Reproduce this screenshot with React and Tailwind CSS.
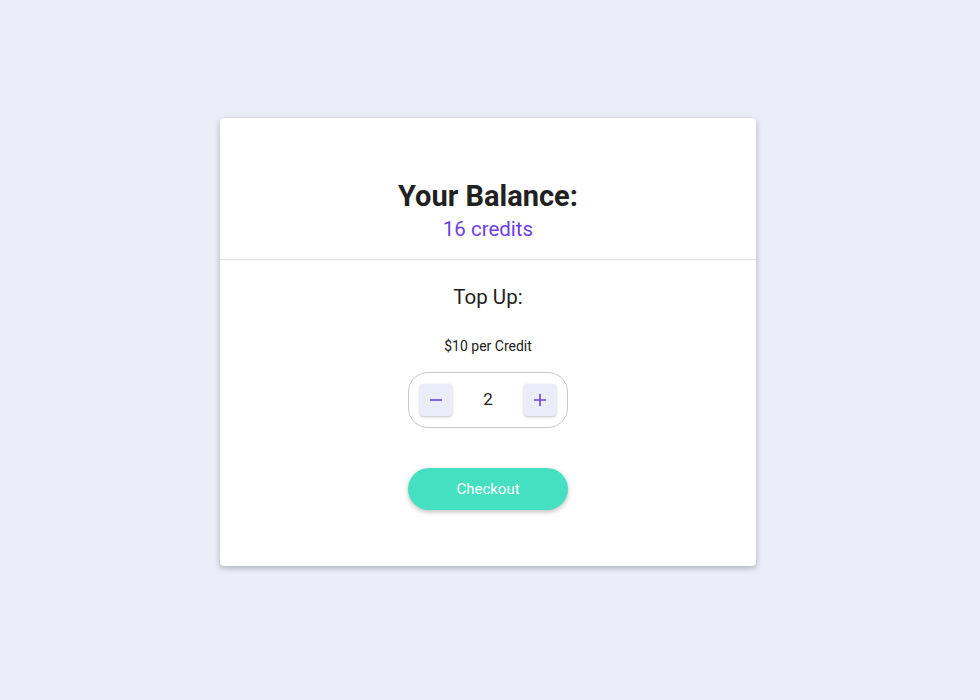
import { useState } from "react";

export default function App() {
  const [qty, setQty] = useState(2);

  return (
    <div
      className="min-h-screen w-full bg-[#ebeef9] flex items-start justify-center pt-[118px] pr-[4px]"
      style={{ fontFamily: "Roboto, 'Liberation Sans', sans-serif" }}
    >
      <div className="w-[536px] h-[448px] bg-white rounded-[4px] shadow-[0_2px_6px_rgba(0,0,0,0.28)] flex flex-col">
        {/* balance */}
        <div className="h-[142px] border-b border-[#e4e4e4] flex flex-col items-center pt-[61px]">
          <h1 className="text-[29px] leading-[34px] font-bold text-[#212121]">Your Balance:</h1>
          <p className="text-[20.5px] leading-[26px] text-[#6e3ee6] mt-[3px]">16 credits</p>
        </div>

        {/* top up */}
        <div className="flex flex-col items-center pt-[24px]">
          <h2 className="text-[20.5px] leading-[26px] text-[#212121]">Top Up:</h2>
          <p className="text-[14px] leading-[18px] text-[#212121] mt-[27px]">$10 per Credit</p>

          <div className="mt-[17px] w-[160px] h-[56px] rounded-[20px] border border-[#c9c9c9] flex items-center justify-between px-[11px]">
            <button
              onClick={() => setQty((q) => Math.max(0, q - 1))}
              className="w-[32px] h-[32px] rounded-[4px] bg-[#eaedf9] shadow-[0_1px_3px_rgba(0,0,0,0.25)] flex items-center justify-center text-[#6e3ee6]"
            >
              <svg width="14" height="14" viewBox="0 0 14 14">
                <path d="M1 7h12" stroke="currentColor" strokeWidth="1.6" />
              </svg>
            </button>
            <span className="text-[17px] font-normal text-[#212121]">{qty}</span>
            <button
              onClick={() => setQty((q) => q + 1)}
              className="w-[32px] h-[32px] rounded-[4px] bg-[#eaedf9] shadow-[0_1px_3px_rgba(0,0,0,0.25)] flex items-center justify-center text-[#6e3ee6]"
            >
              <svg width="14" height="14" viewBox="0 0 14 14">
                <path d="M1 7h12M7 1v12" stroke="currentColor" strokeWidth="1.6" />
              </svg>
            </button>
          </div>

          <button className="mt-[40px] w-[160px] h-[42px] rounded-full bg-[#45dfc2] text-white text-[15px] font-normal shadow-[0_2px_5px_rgba(0,0,0,0.25)]">
            Checkout
          </button>
        </div>
      </div>
    </div>
  );
}
